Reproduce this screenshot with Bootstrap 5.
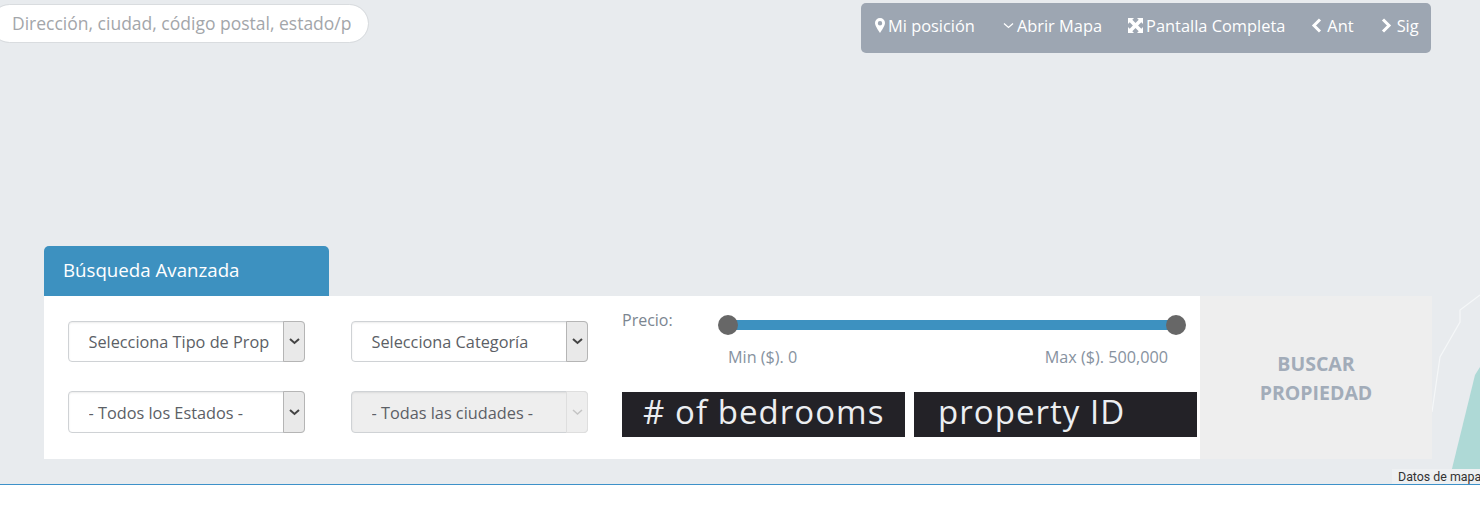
<!DOCTYPE html>
<html>
<head>
    <meta charset="utf-8">
    <link href="https://cdn.jsdelivr.net/npm/bootstrap@5.3.0/dist/css/bootstrap.min.css" rel="stylesheet">
    <style>
        html, body { height: 100%; }
        body { background: #fff; font-family: "Open Sans", sans-serif; color: #5c6470; overflow: hidden; }
        .map-canvas { height: 485px; background: #e8ebee; border-bottom: 1px solid #3d91c9; overflow: hidden; }
        .map-shapes { left: 1380px; top: 280px; }
        .map-credit { right: 0; bottom: 0; height: 15px; padding: 0 0 0 6px; background: #eef0f2; color: #333; font: 12.400px/16px Roboto, sans-serif; white-space: nowrap; width: 88px; overflow: hidden; }
        .addr-box { left: -10px; top: 4px; width: 379px; height: 39px; }
        .addr-box input { height: 39px; padding: 0 17px 2px 21px; font-size: 17.500px; border-color: #d9dcdf; }
        .addr-box input::placeholder { color: #a3a6aa; opacity: 1; }
        .map-tools { left: 861px; top: 3px; width: 570px; height: 50px; background: #9da6b2; border-radius: 5px; padding: 0 0 4px 14px; color: #fff; font-size: 16.400px; }
        .map-tools span { display: inline-flex; align-items: center; gap: 3px; white-space: nowrap; margin-right: 27px; }
        .map-tools span:first-child { margin-right: 28px; }
        .map-tools span:nth-child(2) { margin-right: 26px; }
        .map-tools span:nth-child(3) { margin-right: 26px; }
        .map-tools span:nth-child(n+4) { gap: 5px; }
        .search-wrap { left: 44px; top: 246px; width: 1388px; }
        .search-tab { width: 285px; height: 50px; background: #3d91c0; color: #fff; font-size: 18.700px; line-height: 48px; padding-left: 19px; border-radius: 5px 5px 0 0; }
        .search-body { height: 163px; background: #fff; }
        .field-col { width: 283px; padding: 25px 0 0 24px; }
        .pick-box { width: 237px; height: 41px; margin-bottom: 29px; }
        .pick-box + .pick-box { height: 42px; }
        .pick-box select { height: 100%; padding: 2px 35px 0 19.500px; font-size: 16.300px; color: #5c5f66; border-color: #cfd2d5; border-radius: 4px; background-image: none; box-shadow: inset 0 1px 2px rgba(0,0,0,.08); }
        .pick-box select:disabled { background-color: #eee; }
        .pick-arrow { right: 0; top: 0; bottom: 0; width: 22px; display: flex; align-items: center; justify-content: center; background: #e9e9e9; border: 1px solid #b5b5b5; border-radius: 0 4px 4px 0; pointer-events: none; }
        .pick-box.is-off .pick-arrow { background: #eee; border-color: #dedede; }
        .price-col { width: 578px; margin-left: 12px; padding-top: 14px; }
        .price-label { font-size: 16px; color: #7b8590; line-height: 20px; width: 106px; }
        .price-slider { left: 106px; top: 24px; width: 448px; height: 10px; background: #3d91c0; }
        .price-dot { width: 20px; height: 20px; border-radius: 50%; background: #676767; top: -5px; }
        .dot-min { left: -10px; }
        .dot-max { left: 438px; }
        .price-range { width: 440px; margin: 16px 0 0 106px; font-size: 16.200px; color: #8792a0; line-height: 22px; }
        .dark-row { margin-top: 24px; gap: 9px; }
        .dark-input { width: 283px; height: 45px; background: #232227; border: 0; border-radius: 0; color: #eceef1; font-size: 33px; letter-spacing: 1.050px; padding: 0 0 5px 21px; }
        .dark-input::placeholder { color: #eceef1; opacity: 1; }
        .dark-input + .dark-input { padding-left: 24px; }
        .search-btn { left: 1156px; top: 50px; width: 232px; height: 163px; background: #eeeeee; color: #a2acb9; border: 0; padding-top: 2px; font-size: 19.500px; font-weight: 700; line-height: 29px; }
    </style>
</head>
<body>
<div class="map-canvas position-relative">
    <svg class="map-shapes position-absolute" width="100" height="205" viewBox="0 0 100 205">
        <path d="M100 15 L80 30 L80 42 L60 77 L52 132" fill="none" stroke="#f5f7f8" stroke-width="1.200"/>
        <path d="M100 87 L95 95 L68 205 L100 205 Z" fill="#aed9d6"/>
    </svg>

    <div class="addr-box position-absolute">
        <input type="text" class="form-control rounded-pill" placeholder="Dirección, ciudad, código postal, estado/país">
    </div>

    <div class="map-tools position-absolute d-flex align-items-center">
        <span>
            <svg width="10" height="15" viewBox="0 0 10 15"><path fill="#fff" fill-rule="evenodd" d="M5 0a5 5 0 0 1 5 5c0 2.600-3 7-5 10C3 12 0 7.600 0 5a5 5 0 0 1 5-5zm0 3a2.200 2.200 0 1 0 0 4.400A2.200 2.200 0 0 0 5 3z"/></svg>
            Mi posición
        </span>
        <span>
            <svg width="11" height="7" viewBox="0 0 11 7"><path fill="none" stroke="#fff" stroke-width="1.300" d="M1 1.500l4.500 4 4.500-4"/></svg>
            Abrir Mapa
        </span>
        <span>
            <svg width="15" height="15" viewBox="0 0 15 15"><path fill="#fff" d="M0 0h6L4.300 1.700 7.500 4.900 10.700 1.700 9 0h6v6l-1.700-1.700-3.200 3.200 3.200 3.200L15 9v6H9l1.700-1.700-3.200-3.200-3.200 3.200L6 15H0V9l1.700 1.700 3.200-3.200-3.200-3.200L0 6z"/></svg>
            Pantalla Completa
        </span>
        <span>
            <svg width="11" height="15" viewBox="0 0 11 15"><path fill="none" stroke="#fff" stroke-width="3" d="M9 1.500L3 7.500l6 6"/></svg>
            Ant
        </span>
        <span>
            <svg width="11" height="15" viewBox="0 0 11 15"><path fill="none" stroke="#fff" stroke-width="3" d="M2 1.500l6 6-6 6"/></svg>
            Sig
        </span>
    </div>

    <div class="search-wrap position-absolute">
        <div class="search-tab">Búsqueda Avanzada</div>
        <div class="search-body d-flex">
            <div class="field-col">
                <div class="pick-box position-relative">
                    <select class="form-select"><option>Selecciona Tipo de Propiedad</option></select>
                    <div class="pick-arrow position-absolute"><svg width="11" height="7" viewBox="0 0 11 7"><path fill="none" stroke="#444" stroke-width="2" d="M1 1l4.500 4L10 1"/></svg></div>
                </div>
                <div class="pick-box position-relative">
                    <select class="form-select"><option>- Todos los Estados -</option></select>
                    <div class="pick-arrow position-absolute"><svg width="11" height="7" viewBox="0 0 11 7"><path fill="none" stroke="#444" stroke-width="2" d="M1 1l4.500 4L10 1"/></svg></div>
                </div>
            </div>
            <div class="field-col">
                <div class="pick-box position-relative">
                    <select class="form-select"><option>Selecciona Categoría</option></select>
                    <div class="pick-arrow position-absolute"><svg width="11" height="7" viewBox="0 0 11 7"><path fill="none" stroke="#444" stroke-width="2" d="M1 1l4.500 4L10 1"/></svg></div>
                </div>
                <div class="pick-box is-off position-relative">
                    <select class="form-select" disabled><option>- Todas las ciudades -</option></select>
                    <div class="pick-arrow position-absolute"><svg width="11" height="7" viewBox="0 0 11 7"><path fill="none" stroke="#c4c4c4" stroke-width="1.500" d="M1 1l4.500 4L10 1"/></svg></div>
                </div>
            </div>
            <div class="price-col position-relative">
                <div class="price-label">Precio:</div>
                <div class="price-slider position-absolute">
                    <div class="price-dot dot-min position-absolute"></div>
                    <div class="price-dot dot-max position-absolute"></div>
                </div>
                <div class="price-range d-flex justify-content-between">
                    <span>Min ($). 0</span>
                    <span>Max ($). 500,000</span>
                </div>
                <div class="dark-row d-flex">
                    <input type="text" class="dark-input" placeholder="# of bedrooms">
                    <input type="text" class="dark-input" placeholder="property ID">
                </div>
            </div>
        </div>
        <button type="button" class="search-btn position-absolute">BUSCAR<br>PROPIEDAD</button>
    </div>

    <div class="map-credit position-absolute">Datos de mapa</div>
</div>
<script src="https://cdn.jsdelivr.net/npm/bootstrap@5.3.0/dist/js/bootstrap.bundle.min.js"></script>
</body>
</html>
